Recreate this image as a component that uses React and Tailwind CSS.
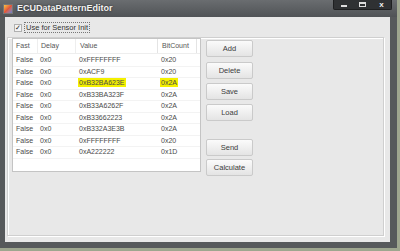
import React from 'react'

const rows = [
    { fast: 'False', delay: '0x0', value: '0xFFFFFFFF', bits: '0x20' },
    { fast: 'False', delay: '0x0', value: '0xACF9', bits: '0x20' },
    { fast: 'False', delay: '0x0', value: '0xB32BA623E', bits: '0x2A', mark: true },
    { fast: 'False', delay: '0x0', value: '0xB33BA323F', bits: '0x2A' },
    { fast: 'False', delay: '0x0', value: '0xB33A6262F', bits: '0x2A' },
    { fast: 'False', delay: '0x0', value: '0xB33662223', bits: '0x2A' },
    { fast: 'False', delay: '0x0', value: '0xB332A3E3B', bits: '0x2A' },
    { fast: 'False', delay: '0x0', value: '0xFFFFFFFF', bits: '0x20' },
    { fast: 'False', delay: '0x0', value: '0xA222222', bits: '0x1D' },
]

const Btn = ({ label, className = '' }) => (
    <div className={`w-[47px] h-[17px] flex items-center justify-center border border-[#cacaca] rounded-[2px] bg-linear-to-b from-[#fbfbfb] to-[#e4e4e4] text-[7.5px] text-[#3c3c3c] ${className}`}>
        {label}
    </div>
)

export default function App() {
    return (
        <div className="w-[400px] h-[251px] bg-[#9ea68f] overflow-hidden" style={{ fontFamily: '"Liberation Sans", Arial, sans-serif' }}>
            <div className="w-[397px] h-[248px] bg-[#56595b] flex flex-col pl-[5px] pr-[7px] pb-[6px]">
                {/* title bar */}
                <div className="h-[17px] flex items-center relative -ml-[5px] -mr-[7px] pl-[3px] bg-linear-to-b from-[#6a6d70] to-[#505356]">
                    <div className="w-[10px] h-[10px] bg-linear-to-br from-[#f6c342] via-[#e0553a] to-[#5a7fd0] border border-[#777]"></div>
                    <span className="ml-[4px] text-[9px] font-bold text-[#f2f2f2]" style={{ textShadow: '0 0 2px #222' }}>ECUDataPatternEditor</span>
                    <div className="absolute right-[5px] top-0 h-[10px] w-[59px] flex bg-[#2f3133] rounded-b-[2px] border-x border-b border-[#1e1f20]">
                        <div className="flex-1 flex items-end justify-center pb-[2px]"><div className="w-[6px] h-[2px] bg-[#ddd]"></div></div>
                        <div className="flex-1 flex items-center justify-center"><div className="w-[7px] h-[5px] border border-[#ddd] border-t-2"></div></div>
                        <div className="flex-1 flex items-center justify-center text-[8px] font-bold text-[#eee] leading-none">x</div>
                    </div>
                </div>
                {/* client area */}
                <div className="flex-1 bg-[#e8e8e8] flex flex-col text-[7px] text-[#4a4a4a]">
                    <div className="flex items-center mt-[5px] ml-[9px] h-[11px]">
                        <div className="w-[8px] h-[8px] border border-[#b0b0b0] bg-[#f4f4f4] flex items-center justify-center text-[7px] leading-none text-[#222]">✓</div>
                        <span className="ml-[2px] px-[1px] border border-dotted border-[#777] leading-[9px] text-[7.5px] text-[#333]">Use for Sensor Init</span>
                    </div>
                    <div className="mt-[4px] ml-[2px] mr-[6px] mb-[6px] flex-1 border border-[#cfcfcf] shadow-[inset_1px_1px_0_#fff,1px_1px_0_#fff] flex pl-[4px] gap-[5px]">
                        <div className="w-[189px] h-[134px] bg-white border border-[#c4c4c4] flex flex-col">
                            <div className="flex h-[15px] items-center border-b border-[#eeeeee] text-[#555]">
                                <div className="w-[25px] pl-[3px] h-full flex items-center border-r border-[#eeeeee]">Fast</div>
                                <div className="w-[38px] pl-[3px] h-full flex items-center border-r border-[#eeeeee]">Delay</div>
                                <div className="w-[82px] pl-[4px] h-full flex items-center border-r border-[#e4e4e4]">Value</div>
                                <div className="w-[39px] pl-[4px] h-full flex items-center border-r border-[#e4e4e4]">BitCount</div>
                            </div>
                            <div className="pt-[1px]">
                                {rows.map((r, i) => (
                                    <div key={i} className="flex h-[11.5px] items-center border-b border-[#f3f3f3]">
                                        <div className="w-[25px] pl-[3px]">{r.fast}</div>
                                        <div className="w-[38px] pl-[2px]">{r.delay}</div>
                                        <div className="w-[82px] pl-[3px]">
                                            <span className={r.mark ? 'bg-[#f4f000] px-[1px] -ml-[1px] py-[1px]' : ''}>{r.value}</span>
                                        </div>
                                        <div className="w-[39px] pl-[3px]">
                                            <span className={r.mark ? 'bg-[#f4f000] px-[1px] -ml-[1px] py-[1px]' : ''}>{r.bits}</span>
                                        </div>
                                    </div>
                                ))}
                            </div>
                        </div>
                        <div className="flex flex-col pt-[2px]">
                            <Btn label="Add" />
                            <Btn label="Delete" className="mt-[5px]" />
                            <Btn label="Save" className="mt-[4px]" />
                            <Btn label="Load" className="mt-[4px]" />
                            <Btn label="Send" className="mt-[18px]" />
                            <Btn label="Calculate" className="mt-[3px]" />
                        </div>
                    </div>
                </div>
            </div>
        </div>
    )
}
